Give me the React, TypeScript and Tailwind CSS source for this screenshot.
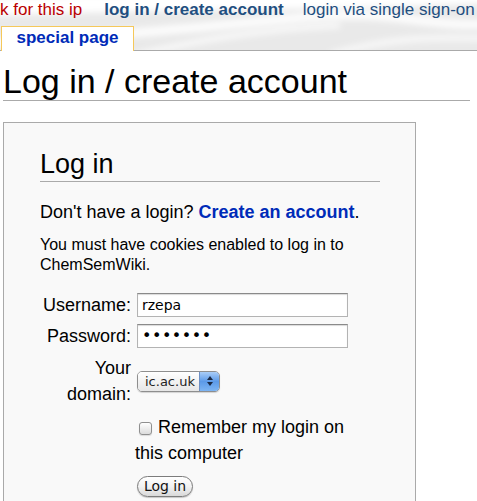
import React from 'react'

const sans = "font-['Liberation_Sans',Arial,Helvetica,sans-serif]"
const ui = "font-['DejaVu_Sans','Liberation_Sans',sans-serif]"

function HeaderBackdrop() {
  return (
    <svg className="absolute inset-0 w-full h-full" viewBox="0 0 477 51" preserveAspectRatio="none">
      <defs>
        <filter id="soft" x="-20%" y="-50%" width="140%" height="200%">
          <feGaussianBlur stdDeviation="3" />
        </filter>
      </defs>
      <rect width="477" height="51" fill="#e9e9e9" />
      <g filter="url(#soft)" fill="none" stroke="#ffffff">
        <path d="M-20 8 C 120 0, 260 4, 500 -6" strokeWidth="18" />
        <path d="M-10 44 C 120 36, 200 28, 300 18 S 420 30, 500 24" strokeWidth="9" opacity="0.9" />
        <path d="M120 60 C 200 40, 260 30, 340 26" strokeWidth="5" opacity="0.8" />
        <path d="M330 56 C 380 40, 430 36, 500 40" strokeWidth="6" opacity="0.7" />
      </g>
    </svg>
  )
}

function Select() {
  return (
    <div className="ml-[2px] flex h-[21px] w-[83px] overflow-hidden rounded-[5px] border border-[#8e8e8e] shadow-[0_1px_1px_rgba(0,0,0,0.15)]">
      <div className={`flex-1 bg-gradient-to-b from-white to-[#e6e6e6] pl-[7px] text-[13px] leading-[19px] text-[#222] ${ui}`}>
        ic.ac.uk
      </div>
      <div className="flex w-[20px] flex-col items-center justify-center gap-[2px] border-l border-[#6c8fc4] bg-gradient-to-b from-[#a9cdf7] via-[#5c9ae8] to-[#7db5f3]">
        <span className="block h-0 w-0 border-x-[3px] border-b-[4px] border-x-transparent border-b-[#1b2a45]" />
        <span className="block h-0 w-0 border-x-[3px] border-t-[4px] border-x-transparent border-t-[#1b2a45]" />
      </div>
    </div>
  )
}

export default function App() {
  return (
    <div className={`relative h-[501px] w-[477px] overflow-hidden bg-white ${sans}`}>
      <div className="relative h-[51px] border-b border-[#aaaaaa]">
        <HeaderBackdrop />
        <div className="relative flex text-[17px] leading-[20px] whitespace-nowrap">
          <span className="text-[#ba0000]">k for this ip</span>
          <span className="ml-[22px] font-bold text-[#1f4f80]">log in / create account</span>
          <span className="ml-[19px] text-[#1f4f80]">login via single sign-on</span>
        </div>
        <div className="relative ml-px mt-[6px] h-[25px] w-[133px] border border-b-0 border-[#f5c85a] bg-white text-center text-[17px] font-bold leading-[21px] text-[#002bb8]">
          special page
        </div>
      </div>

      <div className="pl-[3px] pr-[7px]">
        <h1 className="mt-[11px] border-b border-[#aaaaaa] text-[34px] leading-[38px] text-black">
          Log in / create account
        </h1>

        <div className="mt-[21px] w-[413px] border border-[#aaaaaa] bg-[#f9f9f9] pl-[36px] pr-[35px] pt-[25px] pb-10">
          <h2 className="border-b border-[#aaaaaa] pb-px text-[27px] leading-[32px] text-black">Log in</h2>

          <p className="mt-[19px] text-[18px] leading-[22px] text-black">
            Don't have a login? <span className="font-bold text-[#002bb8]">Create an account</span>.
          </p>
          <p className="mt-[12px] text-[16px] leading-[20px] text-black">
            You must have cookies enabled to log in to ChemSemWiki.
          </p>

          <div className="mt-[17px] grid grid-cols-[91px_215px] gap-x-[4px] text-[18px] text-black">
            <label className="flex h-[26px] items-center justify-end leading-[22px]">Username:</label>
            <div className="flex h-[26px] items-center">
              <input
                defaultValue="rzepa"
                className={`ml-[2px] h-[24px] w-[211px] border border-[#b3b3b3] border-t-[#8a8a8a] bg-white pl-[4px] text-[14px] text-black shadow-[inset_0_1px_1px_rgba(0,0,0,0.15)] outline-none ${ui}`}
              />
            </div>

            <label className="mt-[5px] flex h-[26px] items-center justify-end leading-[22px]">Password:</label>
            <div className="mt-[5px] flex h-[26px] items-center">
              <input
                type="password"
                defaultValue="abcdefg"
                className={`ml-[2px] h-[24px] w-[211px] border border-[#b3b3b3] border-t-[#8a8a8a] bg-white pl-[4px] text-[16px] tracking-[0.5px] text-black shadow-[inset_0_1px_1px_rgba(0,0,0,0.15)] outline-none ${ui}`}
              />
            </div>

            <label className="mt-[6px] flex items-center justify-end text-right leading-[26px]">
              Your domain:
            </label>
            <div className="mt-[6px] flex items-center">
              <Select />
            </div>

            <div className="mt-[7px]" />
            <div className="mt-[7px] leading-[26px]">
              <span className="relative top-[1px] ml-[4px] mr-[6px] inline-block h-[13px] w-[13px] rounded-[3px] border border-[#8f8f8f] bg-gradient-to-b from-white to-[#dcdcdc] align-[-1px] shadow-[0_1px_1px_rgba(0,0,0,0.12)]" />
              Remember my login on this computer
            </div>

            <div className="mt-[6px]" />
            <div className="mt-[6px]">
              <button
                className={`ml-[2px] h-[21px] w-[56px] rounded-full border border-[#7c7c7c] bg-gradient-to-b from-white via-[#f2f2f2] to-[#d9d9d9] text-[14px] leading-[18px] text-[#111] shadow-[0_1px_1px_rgba(0,0,0,0.2)] ${ui}`}
              >
                Log in
              </button>
            </div>
          </div>
        </div>
      </div>
    </div>
  )
}
